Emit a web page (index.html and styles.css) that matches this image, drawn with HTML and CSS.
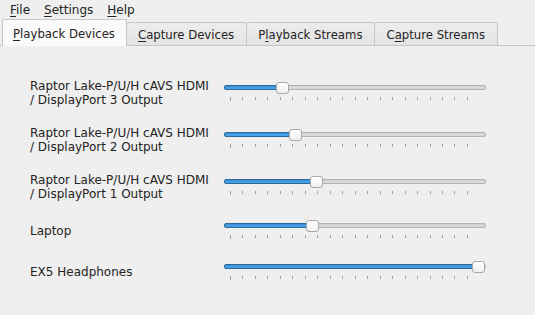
FILE: index.html
```html
<!DOCTYPE html>
<html>
<head>
<title>Volume Control</title>
<link rel="stylesheet" href="styles.css">
</head>
<body>
<div class="menubar">
	<span class="menu"><u>F</u>ile</span>
	<span class="menu"><u>S</u>ettings</span>
	<span class="menu"><u>H</u>elp</span>
</div>
<div class="tabs">
	<div class="tab active"><u>P</u>layback Devices</div>
	<div class="tab"><u>C</u>apture Devices</div>
	<div class="tab">P<u>l</u>ayback Streams</div>
	<div class="tab">C<u>a</u>pture Streams</div>
</div>
<div class="pane">
	<div class="row">
		<div class="name">Raptor Lake-P/U/H cAVS HDMI<br>/ DisplayPort 3 Output</div>
		<div class="slider">
			<div class="groove"><div class="fill" style="width:58px"></div><div class="handle" style="left:52px"></div></div>
			<div class="ticks"><i></i><i></i><i></i><i></i><i></i><i></i><i></i><i></i><i></i><i></i><i></i><i></i><i></i><i></i><i></i><i></i><i></i><i></i><i></i><i></i></div>
		</div>
	</div>
	<div class="row">
		<div class="name">Raptor Lake-P/U/H cAVS HDMI<br>/ DisplayPort 2 Output</div>
		<div class="slider">
			<div class="groove"><div class="fill" style="width:71px"></div><div class="handle" style="left:65px"></div></div>
			<div class="ticks"><i></i><i></i><i></i><i></i><i></i><i></i><i></i><i></i><i></i><i></i><i></i><i></i><i></i><i></i><i></i><i></i><i></i><i></i><i></i><i></i></div>
		</div>
	</div>
	<div class="row">
		<div class="name">Raptor Lake-P/U/H cAVS HDMI<br>/ DisplayPort 1 Output</div>
		<div class="slider">
			<div class="groove"><div class="fill" style="width:92px"></div><div class="handle" style="left:86px"></div></div>
			<div class="ticks"><i></i><i></i><i></i><i></i><i></i><i></i><i></i><i></i><i></i><i></i><i></i><i></i><i></i><i></i><i></i><i></i><i></i><i></i><i></i><i></i></div>
		</div>
	</div>
	<div class="row">
		<div class="name">Laptop</div>
		<div class="slider">
			<div class="groove"><div class="fill" style="width:88px"></div><div class="handle" style="left:82px"></div></div>
			<div class="ticks"><i></i><i></i><i></i><i></i><i></i><i></i><i></i><i></i><i></i><i></i><i></i><i></i><i></i><i></i><i></i><i></i><i></i><i></i><i></i><i></i></div>
		</div>
	</div>
	<div class="row">
		<div class="name">EX5 Headphones</div>
		<div class="slider">
			<div class="groove"><div class="fill" style="width:255px"></div><div class="handle" style="left:248px"></div></div>
			<div class="ticks"><i></i><i></i><i></i><i></i><i></i><i></i><i></i><i></i><i></i><i></i><i></i><i></i><i></i><i></i><i></i><i></i><i></i><i></i><i></i><i></i></div>
		</div>
	</div>
</div>
</body>
</html>
```
FILE: styles.css
```css
html,body{
	margin:0;
	padding:0;
	background-color:#efefef;
	color:#232323;
	font-family:"DejaVu Sans",sans-serif;
	font-size:12px;
	line-height:14px;
}
u{
	text-decoration-thickness:1px;
	text-underline-offset:2px;
}
.menubar{
	display:flex;
	height:19px;
	box-sizing:border-box;
	padding:1px 0 0 3px;
	align-items:center;
}
.menu{
	padding:0 7px;
}
.tabs{
	display:flex;
	align-items:flex-end;
	height:27px;
	padding-left:2px;
	box-sizing:border-box;
	border-bottom:1px solid #c6c6c6;
	font-size:11.7px;
}
.tab{
	height:23px;
	box-sizing:border-box;
	padding:5px 12px 0 11px;
	border:1px solid #c6c6c6;
	border-bottom:none;
	border-left:none;
	border-radius:2px 2px 0 0;
	background:linear-gradient(#ececec,#e4e4e4);
}
.tab.active{
	height:27px;
	padding:7px 11px 0 10px;
	border-left:1px solid #c6c6c6;
	background:#fafafa;
	margin-bottom:-1px;
}
.pane{
	display:flex;
	flex-direction:column;
	gap:19px;
	padding:33px 0 0 30px;
}
.row{
	display:flex;
	align-items:center;
}
.name{
	width:194px;
}
.slider{
	width:262px;
	height:22px;
	display:flex;
	flex-direction:column;
}
.groove{
	position:relative;
	height:12px;
	display:flex;
	align-items:center;
}
.groove::before{
	content:"";
	position:absolute;
	left:0;
	right:0;
	top:3px;
	height:5px;
	box-sizing:border-box;
	border:1px solid #b4b4b4;
	border-radius:2px;
	background:linear-gradient(#c8c8c8,#dedede 40%,#d4d4d4);
}
.fill{
	position:relative;
	height:5px;
	margin-top:-1px;
	box-sizing:border-box;
	border:1px solid #2a6b9c;
	border-radius:2px;
	background:linear-gradient(#3d8fd4,#4ca6ea);
}
.handle{
	position:absolute;
	top:0;
	width:13px;
	height:12px;
	box-sizing:border-box;
	border:1px solid #a8a8a8;
	border-radius:3px;
	background:linear-gradient(#ffffff,#f0f0f0);
}
.ticks{
	display:flex;
	justify-content:space-between;
	width:238px;
	margin:3px 0 0 6px;
}
.ticks i{
	display:block;
	width:1px;
	height:3px;
	background-color:#a0a0a0;
}
.ticks i:first-child{
	height:4px;
}
```
